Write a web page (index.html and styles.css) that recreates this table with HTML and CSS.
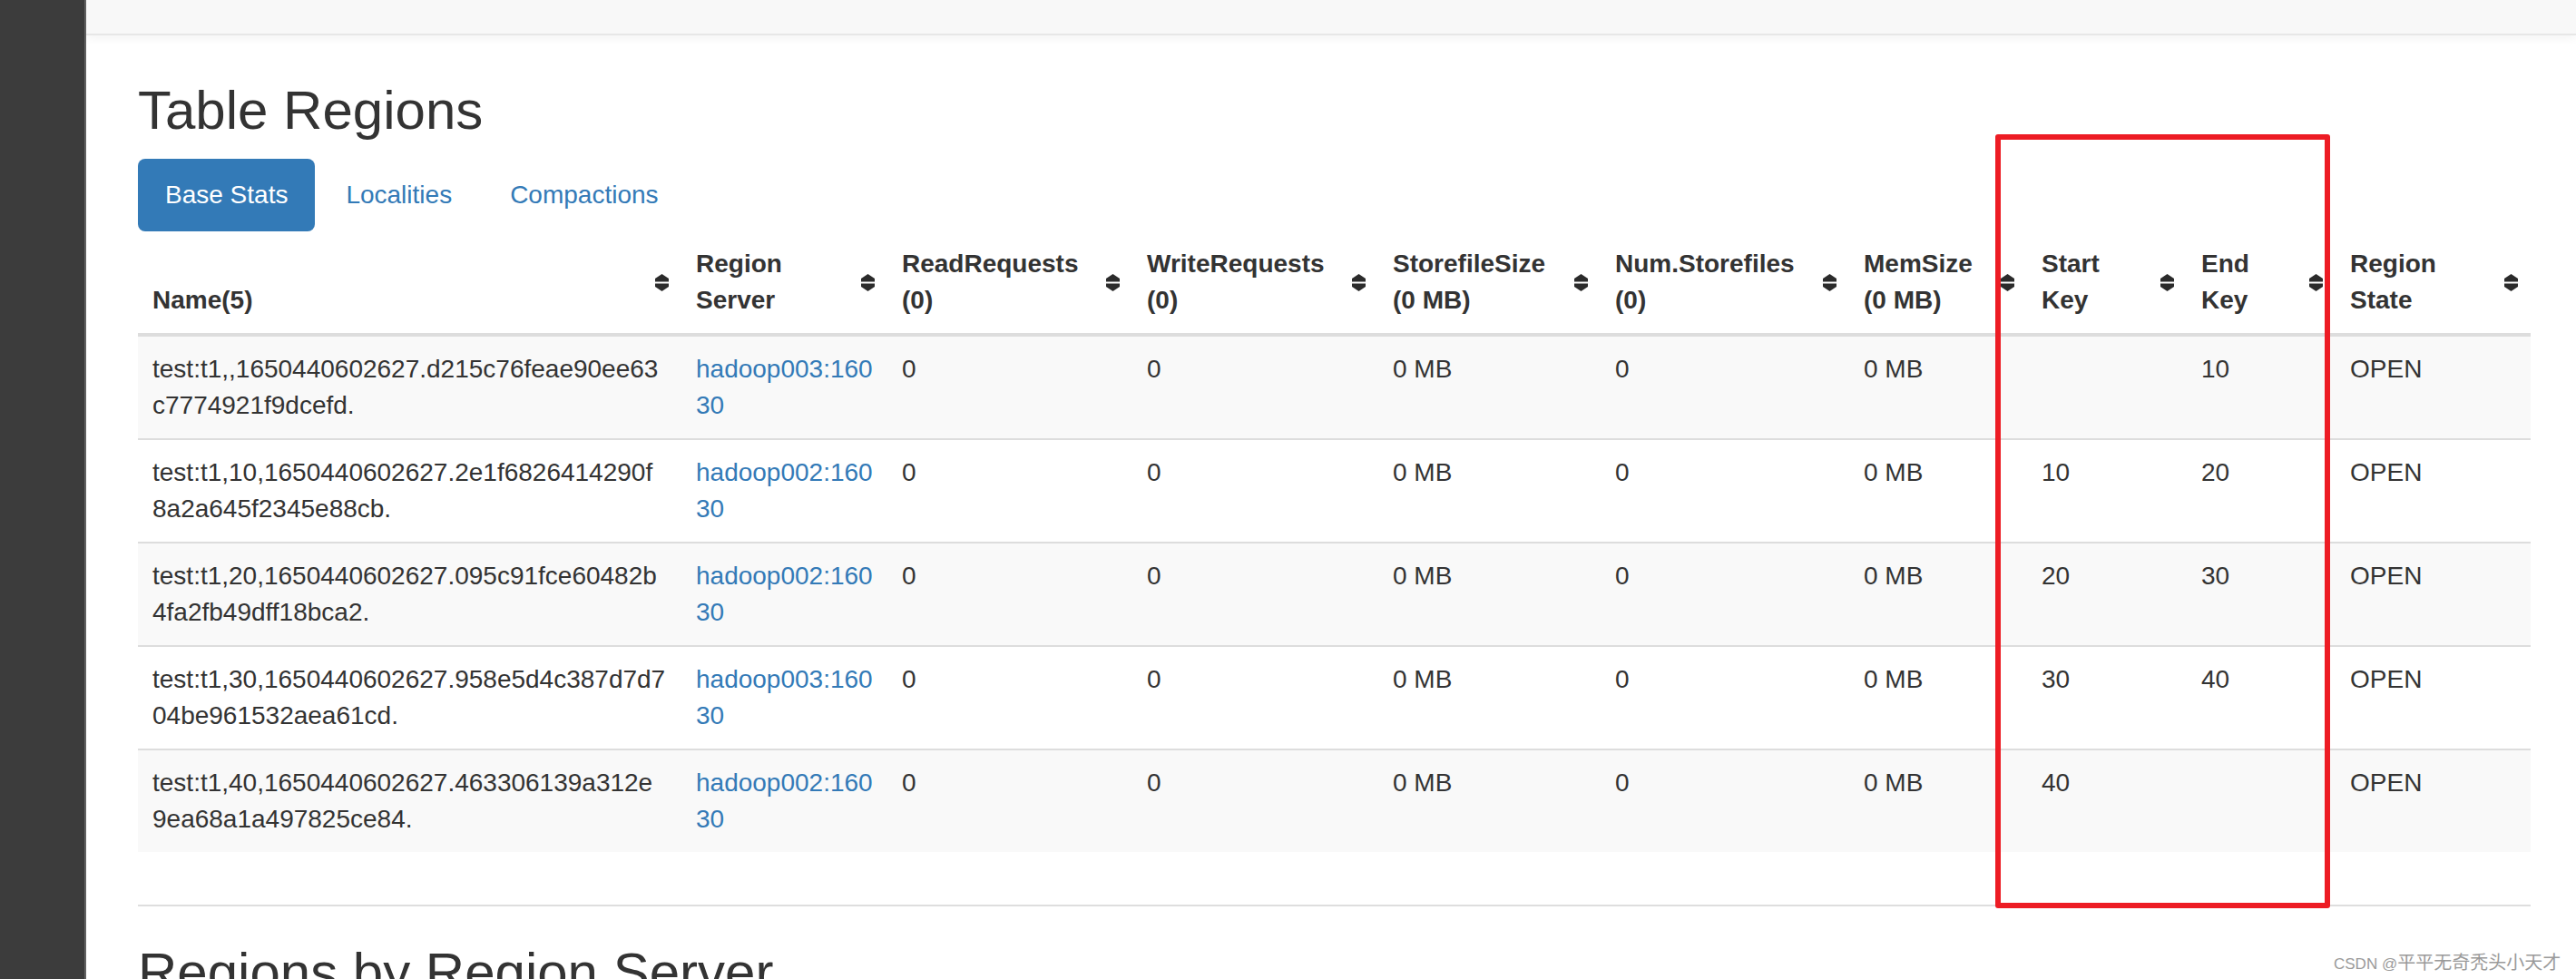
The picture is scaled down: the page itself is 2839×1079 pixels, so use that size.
FILE: index.html
```html
<!DOCTYPE html>
<html lang="en">
<head>
<meta charset="utf-8">
<title>Table Regions</title>
<link rel="stylesheet" href="styles.css">
</head>
<body>
<div class="app">
  <aside class="dock"></aside>
  <div class="page">
    <nav class="navbar"></nav>
    <div class="container">
      <h2 class="title">Table Regions</h2>
      <ul class="pills">
        <li class="active"><a href="#">Base Stats</a></li>
        <li><a href="#">Localities</a></li>
        <li><a href="#">Compactions</a></li>
      </ul>
      <table class="regions">
        <colgroup>
          <col class="c-name"><col class="c-server"><col class="c-read"><col class="c-write"><col class="c-sfsize"><col class="c-sfnum"><col class="c-mem"><col class="c-start"><col class="c-end"><col class="c-state">
        </colgroup>
        <thead>
          <tr>
            <th>Name(5)<svg class="sort" viewBox="0 0 15 19"><path d="M7.5 0L15 5V8.5H0V5Z"/><path d="M0 10.5H15V14L7.5 19L0 14Z"/></svg></th>
            <th>Region<br>Server<svg class="sort" viewBox="0 0 15 19"><path d="M7.5 0L15 5V8.5H0V5Z"/><path d="M0 10.5H15V14L7.5 19L0 14Z"/></svg></th>
            <th>ReadRequests<br>(0)<svg class="sort" viewBox="0 0 15 19"><path d="M7.5 0L15 5V8.5H0V5Z"/><path d="M0 10.5H15V14L7.5 19L0 14Z"/></svg></th>
            <th>WriteRequests<br>(0)<svg class="sort" viewBox="0 0 15 19"><path d="M7.5 0L15 5V8.5H0V5Z"/><path d="M0 10.5H15V14L7.5 19L0 14Z"/></svg></th>
            <th>StorefileSize<br>(0 MB)<svg class="sort" viewBox="0 0 15 19"><path d="M7.5 0L15 5V8.5H0V5Z"/><path d="M0 10.5H15V14L7.5 19L0 14Z"/></svg></th>
            <th>Num.Storefiles<br>(0)<svg class="sort" viewBox="0 0 15 19"><path d="M7.5 0L15 5V8.5H0V5Z"/><path d="M0 10.5H15V14L7.5 19L0 14Z"/></svg></th>
            <th>MemSize<br>(0 MB)<svg class="sort" viewBox="0 0 15 19"><path d="M7.5 0L15 5V8.5H0V5Z"/><path d="M0 10.5H15V14L7.5 19L0 14Z"/></svg></th>
            <th>Start<br>Key<svg class="sort" viewBox="0 0 15 19"><path d="M7.5 0L15 5V8.5H0V5Z"/><path d="M0 10.5H15V14L7.5 19L0 14Z"/></svg></th>
            <th>End<br>Key<svg class="sort" viewBox="0 0 15 19"><path d="M7.5 0L15 5V8.5H0V5Z"/><path d="M0 10.5H15V14L7.5 19L0 14Z"/></svg></th>
            <th>Region<br>State<svg class="sort" viewBox="0 0 15 19"><path d="M7.5 0L15 5V8.5H0V5Z"/><path d="M0 10.5H15V14L7.5 19L0 14Z"/></svg></th>
          </tr>
        </thead>
        <tbody>
          <tr>
            <td>test:t1,,1650440602627.d215c76feae90ee63<br>c7774921f9dcefd.</td>
            <td><a class="link" href="#">hadoop003:160<br>30</a></td>
            <td>0</td><td>0</td><td>0 MB</td><td>0</td><td>0 MB</td><td></td><td>10</td><td>OPEN</td>
          </tr>
          <tr>
            <td>test:t1,10,1650440602627.2e1f6826414290f<br>8a2a645f2345e88cb.</td>
            <td><a class="link" href="#">hadoop002:160<br>30</a></td>
            <td>0</td><td>0</td><td>0 MB</td><td>0</td><td>0 MB</td><td>10</td><td>20</td><td>OPEN</td>
          </tr>
          <tr>
            <td>test:t1,20,1650440602627.095c91fce60482b<br>4fa2fb49dff18bca2.</td>
            <td><a class="link" href="#">hadoop002:160<br>30</a></td>
            <td>0</td><td>0</td><td>0 MB</td><td>0</td><td>0 MB</td><td>20</td><td>30</td><td>OPEN</td>
          </tr>
          <tr>
            <td>test:t1,30,1650440602627.958e5d4c387d7d7<br>04be961532aea61cd.</td>
            <td><a class="link" href="#">hadoop003:160<br>30</a></td>
            <td>0</td><td>0</td><td>0 MB</td><td>0</td><td>0 MB</td><td>30</td><td>40</td><td>OPEN</td>
          </tr>
          <tr>
            <td>test:t1,40,1650440602627.463306139a312e<br>9ea68a1a497825ce84.</td>
            <td><a class="link" href="#">hadoop002:160<br>30</a></td>
            <td>0</td><td>0</td><td>0 MB</td><td>0</td><td>0 MB</td><td>40</td><td></td><td>OPEN</td>
          </tr>
        </tbody>
      </table>
      <hr class="rule">
      <h2 class="title">Regions by Region Server</h2>
    </div>
  </div>
</div>
<div class="highlight"></div>
<div class="watermark">CSDN @<span class="cjk">平平无奇秃头小天才</span></div>
</body>
</html>
```

FILE: styles.css
```css
html, body {
  margin: 0;
  padding: 0;
  height: 100%;
  overflow: hidden;
  background: #fff;
}

body {
  font-family: "Liberation Sans", Arial, sans-serif;
  font-size: 28px;
  line-height: 40px;
  color: #333;
  position: relative;
}

.app {
  display: flex;
  height: 1079px;
}

.dock {
  flex: none;
  width: 93px;
  background: #3c3c3c;
  border-right: 2px solid #626262;
}

.page {
  flex: 1;
  min-width: 0;
  display: flex;
  flex-direction: column;
}

.navbar {
  flex: none;
  height: 37px;
  background: #f8f8f8;
  border-bottom: 2px solid #e7e7e7;
  box-shadow: 0 3px 10px rgba(0, 0, 0, 0.05);
}

.container {
  padding: 50px 50px 0 57px;
}

.title {
  font-size: 60px;
  line-height: 66px;
  font-weight: normal;
  color: #333;
  margin: 0 0 20px;
}

.pills {
  display: flex;
  gap: 4px;
  list-style: none;
  margin: 0;
  padding: 0;
}

.pills a {
  display: block;
  padding: 20px 30px;
  border-radius: 8px;
  color: #337ab7;
  text-decoration: none;
}

.pills .active a {
  background: #337ab7;
  color: #fff;
}

.regions {
  width: 2637px;
  table-layout: fixed;
  border-collapse: collapse;
  border-spacing: 0;
}

.c-name { width: 599px; }
.c-server { width: 227px; }
.c-read { width: 270px; }
.c-write { width: 271px; }
.c-sfsize { width: 245px; }
.c-sfnum { width: 274px; }
.c-mem { width: 196px; }
.c-start { width: 176px; }
.c-end { width: 164px; }
.c-state { width: 215px; }

.regions th {
  position: relative;
  text-align: left;
  vertical-align: bottom;
  padding: 16px;
  font-weight: bold;
  border-bottom: 4px solid #ddd;
  white-space: nowrap;
}

.regions td {
  padding: 16px;
  vertical-align: top;
  border-top: 2px solid #ddd;
  white-space: nowrap;
}

.regions tbody tr:nth-child(odd) td {
  background: #f9f9f9;
}

.sort {
  position: absolute;
  right: 14px;
  top: 50%;
  margin-top: -9px;
  width: 15px;
  height: 19px;
  fill: #2b2b2b;
}

.link {
  color: #337ab7;
  text-decoration: none;
}

.rule {
  margin: 58px 0 40px;
  border: 0;
  border-top: 2px solid #dedede;
  height: 0;
}

.highlight {
  position: absolute;
  left: 2199px;
  top: 148px;
  width: 369px;
  height: 853px;
  box-sizing: border-box;
  border: 6px solid #ed1c24;
  border-radius: 3px;
}

.watermark {
  position: absolute;
  left: 2572px;
  top: 1048px;
  font-family: "Liberation Sans", "Noto Sans CJK SC", sans-serif;
  font-size: 17px;
  line-height: 24px;
  color: #9a9a9a;
  text-shadow: 0 0 1px #fff;
  white-space: nowrap;
}

.watermark .cjk {
  font-family: "Noto Sans CJK SC", sans-serif;
  font-size: 20px;
}
```
